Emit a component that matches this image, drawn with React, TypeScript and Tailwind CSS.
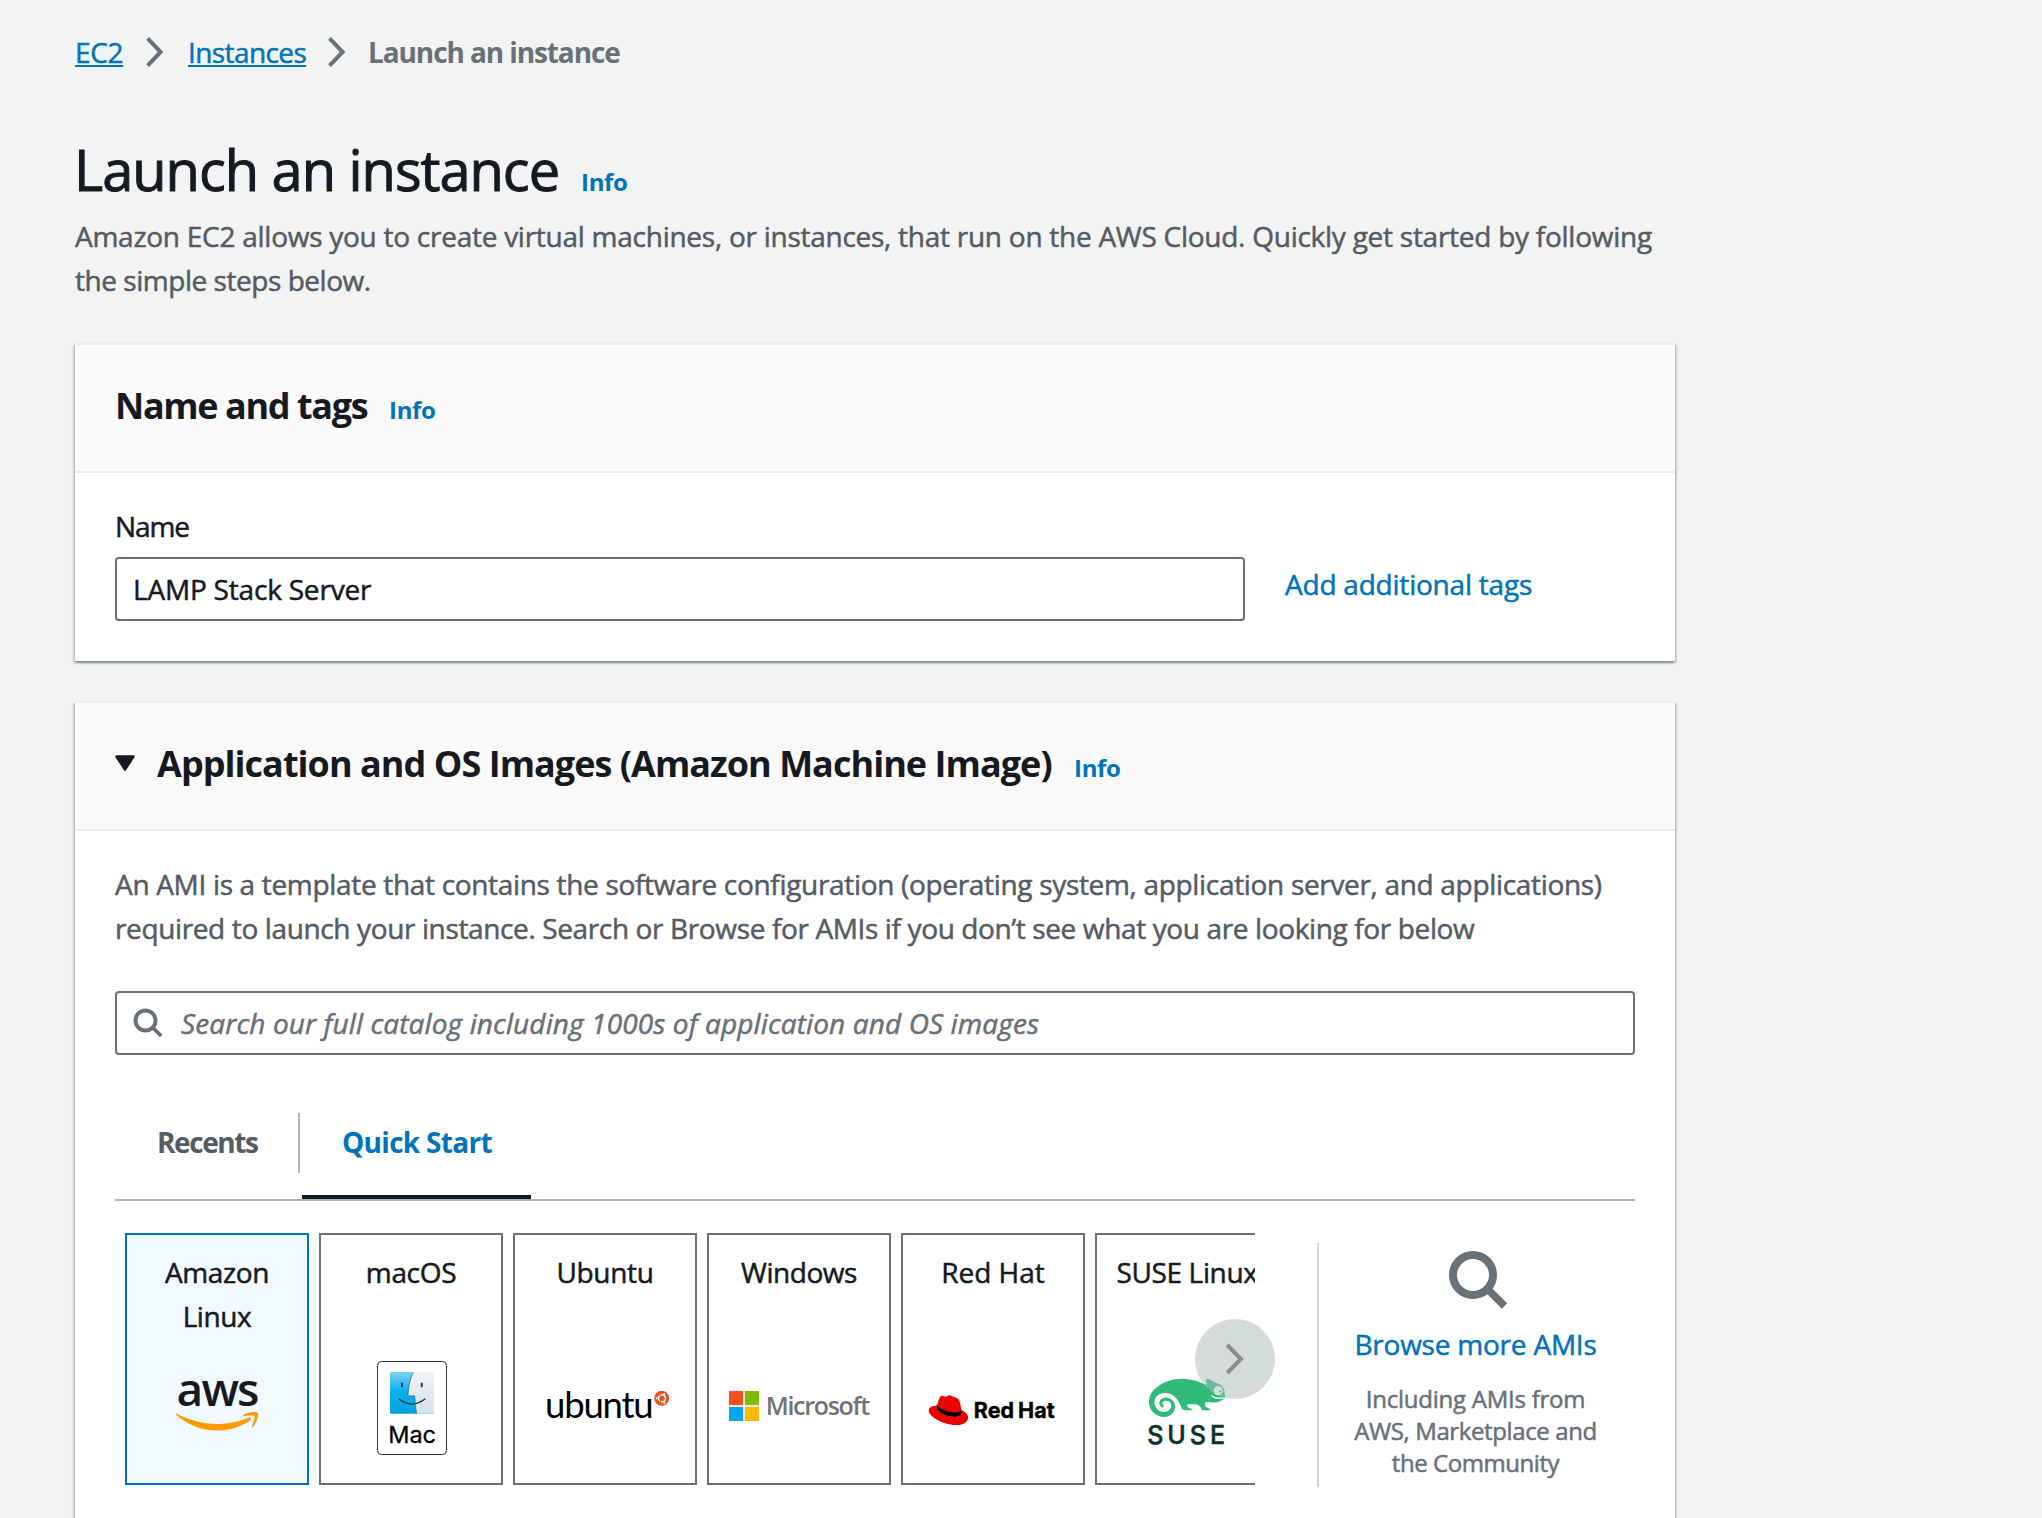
import React from "react";
import { SiSuse } from "react-icons/si";

const PANEL =
  "w-[1600px] shrink-0 bg-white shadow-[0_2px_2px_0_rgba(0,28,36,0.3),2px_2px_2px_0_rgba(0,28,36,0.15),-2px_2px_2px_0_rgba(0,28,36,0.15)]";

function Chevron() {
  return (
    <svg className="h-[32px] w-[18px] shrink-0" viewBox="0 0 18 32" fill="none" stroke="#687078" strokeWidth="4">
      <path d="M1.6 2.4 14.6 16 1.6 29.6" />
    </svg>
  );
}

function SearchIcon({ className }: { className: string }) {
  return (
    <svg className={className} viewBox="0 0 60 60" fill="none" stroke="#687078" strokeWidth="8">
      <circle cx="25" cy="25" r="20" />
      <path d="M40 39.5 56.5 56" strokeWidth="7.5" />
    </svg>
  );
}

function Info() {
  return (
    <a href="#" className="text-2xl leading-[32px] font-bold tracking-[-0.3px] text-[#0073bb] [-webkit-text-stroke:0]">
      Info
    </a>
  );
}

function PanelHeader({ children }: { children: React.ReactNode }) {
  return (
    <div className="flex h-[130px] border-y-2 border-[#eaeded] bg-[#fafafa] pt-[39px] pl-[40px]">
      <div className="flex items-baseline self-start">{children}</div>
    </div>
  );
}

const LOGO = "block h-[145px] w-[180px] [-webkit-text-stroke:0]";

function AwsLogo() {
  return (
    <svg className={LOGO} viewBox="0 0 180 145">
      <text x="49.500" y="68.300" fontFamily="Open Sans" fontWeight="600" fontSize="46" letterSpacing="-1.800" fill="#16191f">
        aws
      </text>
      <g fill="#ff9900">
        <path d="M49.4 75.6C61 82 75 86 90 86c11 0 22-2.500 31.500-6.300 2.300-.9 3.500 1.100 1.700 2.500C114 89 101 92.600 90 92.600c-16 0-30-6-40.800-15.800-.8-.8-.6-1.600.2-1.200Z" />
        <path d="M116 77.300c5-3.800 13.500-4 14.800-2.300 1.200 1.800-.3 9-5 14-1 .8-1 0-.8-1 1.200-2.800 3.400-8.500 2.300-9.800-1.300-1.400-6.300-.8-9.800-.3-1.500.1-2-.1-1.500-.6Z" />
      </g>
    </svg>
  );
}

function MacLogo() {
  return (
    <svg className={LOGO} viewBox="0 0 180 145">
      <defs>
        <linearGradient id="finderBlue" x1="0" y1="0" x2="0" y2="1">
          <stop offset="0" stopColor="#7fd3f7" />
          <stop offset="0.45" stopColor="#06b4ee" />
          <stop offset="1" stopColor="#00a0e0" />
        </linearGradient>
        <linearGradient id="finderWhite" x1="0" y1="0" x2="0" y2="1">
          <stop offset="0" stopColor="#f1f2f5" />
          <stop offset="1" stopColor="#d6e0e9" />
        </linearGradient>
      </defs>
      <rect x="56.500" y="23.500" width="69" height="93" rx="4" fill="#fff" stroke="#333" />
      <rect x="69" y="34" width="44" height="41.700" rx="1.500" fill="url(#finderBlue)" />
      <path
        d="M92.500 34H111.500a1.500 1.500 0 0 1 1.500 1.500V74.200a1.500 1.500 0 0 1-1.500 1.500H95.500C94.500 70 94 64 93.800 58H87C87.200 49 89 41 92.500 34Z"
        fill="url(#finderWhite)"
      />
      <g fill="none" stroke="#1a3145">
        <path d="M92.300 34.300C89 41 87.200 49 87 57.800h6.700c.2 6 .8 12 1.900 17.700" strokeWidth="0.500" />
        <path d="M77.700 60.800q13.300 10.500 26.600 0" strokeWidth="1.300" />
        <path d="M81 44.800v4.500M100.700 44.800v4.500" strokeWidth="1.900" />
      </g>
      <text x="67.300" y="105" fontFamily="Inter" fontWeight="400" fontSize="23.500" letterSpacing="-0.100" fill="#000" stroke="#000" strokeWidth="0.300">
        Mac
      </text>
    </svg>
  );
}

function UbuntuLogo() {
  return (
    <svg className={LOGO} viewBox="0 0 180 145">
      <text x="30" y="79.500" fontFamily="Lato" fontSize="36.500" letterSpacing="-1.200" fill="#000">
        ubuntu
      </text>
      <circle cx="146.700" cy="60.300" r="7.500" fill="#e95420" />
      <circle cx="146.900" cy="60.300" r="3.500" fill="none" stroke="#fff" strokeWidth="1.400" strokeDasharray="6.300 1.030" />
      <g fill="#fff">
        <circle cx="141.700" cy="60.300" r="1.100" />
        <circle cx="149.300" cy="56" r="1.100" />
        <circle cx="149.300" cy="64.700" r="1.100" />
      </g>
    </svg>
  );
}

function MicrosoftLogo() {
  return (
    <svg className={LOGO} viewBox="0 0 180 145">
      <rect x="20" y="53" width="30" height="30" fill="#f0ebd8" />
      <rect x="20" y="53" width="14" height="14" fill="#f65022" />
      <rect x="36" y="53" width="14" height="14" fill="#80bb03" />
      <rect x="20" y="69" width="14" height="14" fill="#03a5f0" />
      <rect x="36" y="69" width="14" height="14" fill="#ffb902" />
      <text x="56.700" y="77" fontFamily="Open Sans" fontWeight="600" fontSize="25" letterSpacing="-1.300" fill="#737373">
        Microsoft
      </text>
    </svg>
  );
}

function RedHatLogo() {
  return (
    <svg className={LOGO} viewBox="0 0 180 145">
      <g transform="translate(25.700 52.500) scale(1.640)">
        <path
          fill="#000"
          d="M4.600 9.600 5 8.200C6 10.500 11 13 16 13c2 0 3.870-.4 3.870-1.900l.46 2.130c0 1.770-2 2.900-4.600 2.900-5.930 0-11.200-3.500-11.200-5.900Z"
        />
        <path
          fill="#ee0000"
          d="M16.009 13.386c1.577 0 3.860-.326 3.860-2.202a1.765 1.765 0 0 0-.04-.431l-.94-4.080c-.216-.898-.406-1.305-1.982-2.093-1.223-.625-3.888-1.658-4.676-1.658-.733 0-.947.946-1.822.946-.842 0-1.467-.706-2.255-.706-.757 0-1.250.515-1.630 1.576 0 0-1.060 2.990-1.197 3.424a.81.81 0 0 0-.028.245c0 1.162 4.577 4.974 10.710 4.974m4.101-1.435c.218 1.032.218 1.140.218 1.277 0 1.765-1.984 2.745-4.593 2.745-5.895.004-11.060-3.451-11.060-5.734a2.326 2.326 0 0 1 .19-.925C2.746 9.415 0 9.794 0 12.217c0 3.969 9.405 8.861 16.851 8.861 5.710 0 7.149-2.582 7.149-4.620 0-1.605-1.387-3.425-3.887-4.512"
        />
      </g>
      <g fontFamily="Inter" fontWeight="700" fontSize="21.500" fill="#000" stroke="#000" strokeWidth="0.400">
        <text x="70.800" y="80">Red</text>
        <text x="114.900" y="80" letterSpacing="0.200">Hat</text>
      </g>
    </svg>
  );
}

function SuseLogo() {
  return (
    <svg className={LOGO} viewBox="0 0 180 145">
      <SiSuse x="52" y="21.900" size={76} color="#30ba78" />
      <text
        x="50.200"
        y="106"
        fontFamily="Inter"
        fontWeight="500"
        fontSize="25"
        letterSpacing="4"
        fill="#0c322c"
        stroke="#0c322c"
        strokeWidth="0.500"
      >
        SUSE
      </text>
    </svg>
  );
}

const TILES = [
  { label: "Amazon Linux", logo: <AwsLogo />, cls: "border-[#0073bb] bg-[#f1faff] px-8 tracking-[-0.4px]" },
  { label: "macOS", logo: <MacLogo />, cls: "border-[#687078] bg-white tracking-[-0.32px]" },
  { label: "Ubuntu", logo: <UbuntuLogo />, cls: "border-[#687078] bg-white tracking-[-0.3px]" },
  { label: "Windows", logo: <MicrosoftLogo />, cls: "border-[#687078] bg-white tracking-[-0.46px]" },
  { label: "Red Hat", logo: <RedHatLogo />, cls: "border-[#687078] bg-white tracking-[-0.02px]" },
  { label: "SUSE Linux", logo: <SuseLogo />, cls: "border-[#687078] bg-white tracking-[-0.35px]" },
];

export default function App() {
  return (
    <div className="flex h-[1518px] w-[2042px] flex-col overflow-hidden bg-[#f2f3f3] pt-[30px] pl-[75px] font-['Open_Sans',sans-serif] text-[28px] leading-[44px] text-[#16191f] [-webkit-text-stroke:0.5px]">
      <nav className="flex h-[44px] shrink-0 items-center">
        <a href="#" className="w-[49px] tracking-[-0.3px] whitespace-nowrap text-[#0073bb] underline decoration-2 underline-offset-2">
          EC2
        </a>
        <div className="ml-[22px] flex">
          <Chevron />
        </div>
        <a href="#" className="ml-[24px] w-[118px] tracking-[-0.6px] whitespace-nowrap text-[#0073bb] underline decoration-2 underline-offset-2">
          Instances
        </a>
        <div className="ml-[22px] flex">
          <Chevron />
        </div>
        <span className="ml-[22px] font-bold tracking-[-1.1px] text-[#687078] [-webkit-text-stroke:0]">Launch an instance</span>
      </nav>

      <header className="mt-[61px] shrink-0">
        <div className="flex h-[68px] items-baseline">
          <h1 className="ml-[-1px] w-[507px] text-[56px] leading-[68px] tracking-[-1.03px] whitespace-nowrap [-webkit-text-stroke:1px]">
            Launch an instance
          </h1>
          <Info />
        </div>
        <p className="mt-[11px] whitespace-nowrap text-[#545b64]">
          <span className="block tracking-[-0.26px]">
            Amazon EC2 allows you to create virtual machines, or instances, that run on the AWS Cloud. Quickly get started by following
          </span>
          <span className="block tracking-[-0.46px]">the simple steps below.</span>
        </p>
      </header>

      <section className={PANEL + " mt-[41px] h-[318px]"}>
        <PanelHeader>
          <h2 className="w-[274px] text-4xl leading-[44px] font-bold tracking-[-1.38px] whitespace-nowrap [-webkit-text-stroke:0]">
            Name and tags
          </h2>
          <Info />
        </PanelHeader>
        <div className="flex items-end px-[40px] pt-[31px]">
          <div className="w-[1130px]">
            <label className="block tracking-[-1.1px]">Name</label>
            <div className="mt-[9px] flex h-[64px] items-center rounded-[4px] border-2 border-[#687078] bg-white pl-[16px] tracking-[-0.2px]">
              LAMP Stack Server
            </div>
          </div>
          <a href="#" className="mb-[15px] ml-[40px] font-medium tracking-[-0.22px] text-[#0073bb]">
            Add additional tags
          </a>
        </div>
      </section>

      <section className={PANEL + " mt-[40px] h-[900px]"}>
        <PanelHeader>
          <svg className="mt-[13px] h-[16px] w-[20px] self-start" viewBox="0 0 20 16">
            <path d="M1.500 1.500h17L10 14.500Z" fill="#16191f" stroke="#16191f" strokeWidth="2.500" strokeLinejoin="round" />
          </svg>
          <h2 className="ml-[22px] w-[917px] text-4xl leading-[44px] font-bold tracking-[-0.96px] whitespace-nowrap [-webkit-text-stroke:0]">
            Application and OS Images (Amazon Machine Image)
          </h2>
          <Info />
        </PanelHeader>
        <div className="px-[40px] pt-[31px]">
          <p className="whitespace-nowrap text-[#545b64]">
            <span className="block tracking-[-0.32px]">
              An AMI is a template that contains the software configuration (operating system, application server, and applications)
            </span>
            <span className="block tracking-[-0.37px]">
              required to launch your instance. Search or Browse for AMIs if you don’t see what you are looking for below
            </span>
          </p>

          <div className="mt-[41px] flex h-[64px] items-center rounded-[4px] border-2 border-[#687078] pl-[16px]">
            <SearchIcon className="h-[30px] w-[30px]" />
            <span className="ml-[18px] tracking-[0.12px] text-[#687078] italic">
              Search our full catalog including 1000s of application and OS images
            </span>
          </div>

          <div className="mt-[58px] flex h-[88px] border-b-2 border-[#aab7b8] font-bold [-webkit-text-stroke:0]">
            <div className="h-[60px] w-[185px] border-r-2 border-[#aab7b8] pt-[7px] pl-[42px] tracking-[-1.4px] text-[#545b64]">Recents</div>
            <div className="ml-[2px] w-[229px] border-b-4 border-[#16191f] pt-[7px] pl-[40px] tracking-[-0.7px] text-[#0073bb]">Quick Start</div>
          </div>

          <div className="mt-[32px] flex pl-[10px]">
            <div className="relative">
              <div className="flex w-[1130px] gap-[10px] overflow-hidden">
                {TILES.map((tile) => (
                  <div key={tile.label} className={"h-[252px] w-[184px] shrink-0 border-2 pt-[15px] text-center " + tile.cls}>
                    <div className="h-[88px]">{tile.label}</div>
                    <div className="flex justify-center">
                      <div className="w-[180px] shrink-0 tracking-normal">{tile.logo}</div>
                    </div>
                  </div>
                ))}
              </div>
              <button className="absolute top-[86px] left-[1070px] h-[80px] w-[80px] rounded-full bg-[#aab7b8]/50">
                <svg viewBox="0 0 80 80" fill="none" stroke="#8b8b8b" strokeWidth="4">
                  <path d="M32.200 26 45.900 40 32.200 54" />
                </svg>
              </button>
            </div>
            <div className="mt-[10px] ml-[62px] flex h-[244px] w-[315px] flex-col items-center border-l-2 border-[#d5d5d5] pt-[7px] text-center">
              <SearchIcon className="ml-[5px] h-[60px] w-[60px]" />
              <a href="#" className="mt-[12px] font-medium tracking-[-0.22px] text-[#0073bb]">
                Browse more AMIs
              </a>
              <p className="mt-[17px] text-2xl leading-[32px] text-[#687078]">
                <span className="block tracking-[-0.24px]">Including AMIs from</span>
                <span className="block tracking-[-0.39px]">AWS, Marketplace and</span>
                <span className="block tracking-[-0.44px]">the Community</span>
              </p>
            </div>
          </div>
        </div>
      </section>
    </div>
  );
}
